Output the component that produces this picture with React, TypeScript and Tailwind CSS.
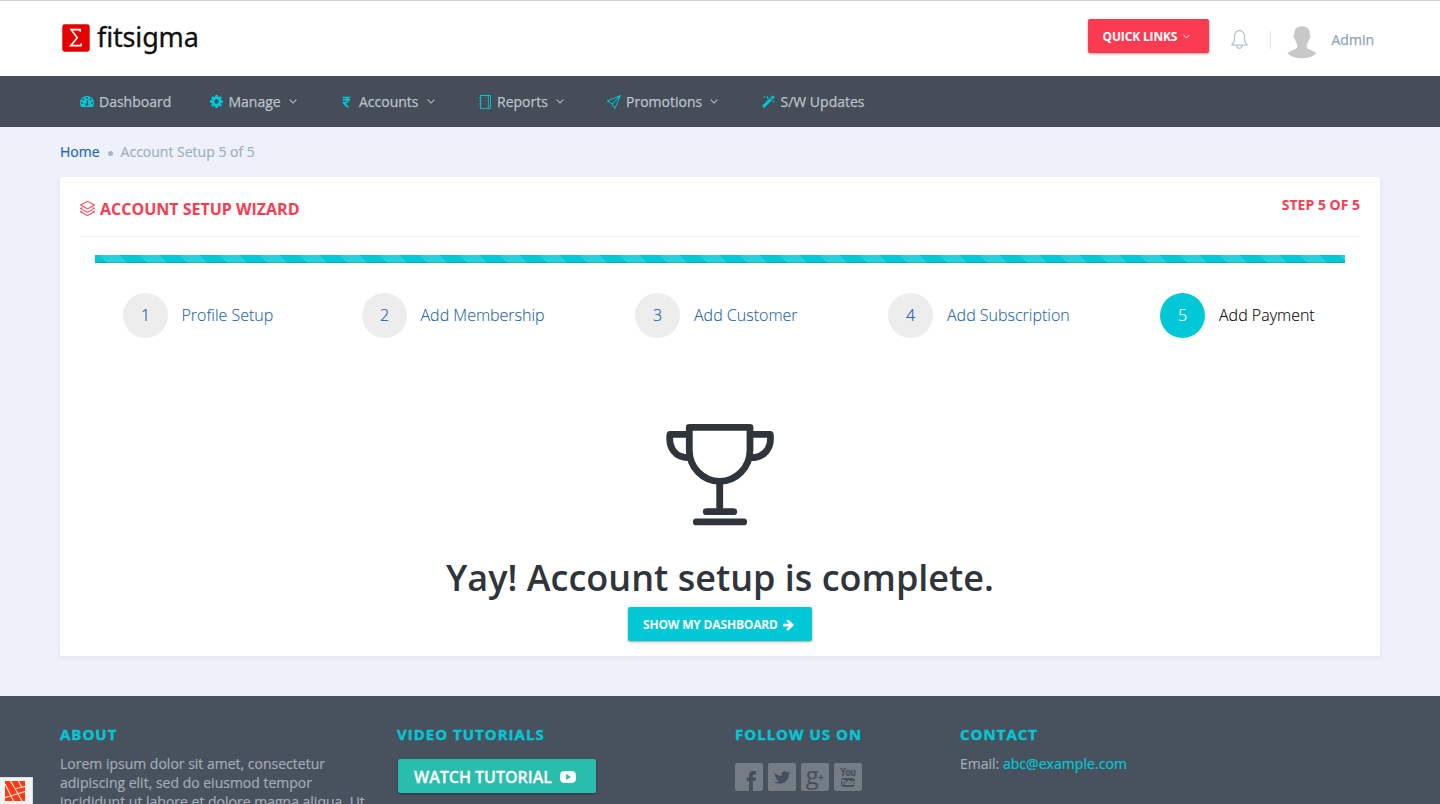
import type { ReactNode } from "react";
import { FaRupeeSign } from "react-icons/fa";
import { SlLayers, SlNotebook, SlPaperPlane, SlBell } from "react-icons/sl";

function Angle({ className }: { className: string }) {
  return (
    <svg viewBox="0 0 10 6" className={className} fill="none" stroke="currentColor" strokeWidth="1.3">
      <path d="M0.8 0.8 5 5 9.2 0.8" />
    </svg>
  );
}

function Gauge() {
  return (
    <svg viewBox="0 128 1792 1408" className="h-[11px] w-[14px]" fill="currentColor">
      <path d="M1792 1024q0 261-141 483-19 29-54 29h-1402q-35 0-54-29-141-221-141-483 0-182 71-348t191-286 286-191 348-71 348 71 286 191 191 286 71 348z" />
      <g fill="#444d58">
        <circle cx="256" cy="1024" r="128" />
        <circle cx="448" cy="576" r="128" />
        <circle cx="896" cy="384" r="128" />
        <circle cx="1344" cy="576" r="128" />
        <circle cx="1536" cy="1024" r="128" />
        <circle cx="880" cy="1220" r="190" />
        <path d="M820 1100 930 640 1060 670 960 1110Z" />
      </g>
    </svg>
  );
}

function Cog() {
  return (
    <svg viewBox="0 128 1536 1536" className="h-[13px] w-[13px]" fill="currentColor">
      <path d="M1024 896q0-106-75-181t-181-75-181 75-75 181 75 181 181 75 181-75 75-181zm512-109v222q0 12-8 23t-20 13l-185 28q-19 54-39 91 35 50 107 138 10 12 10 25t-9 23q-27 37-99 108t-94 71q-12 0-26-9l-138-108q-44 23-91 38-16 136-29 186-7 28-36 28h-222q-14 0-24.5-8.5t-11.5-21.5l-28-184q-49-16-90-37l-141 107q-10 9-25 9-14 0-25-11-126-114-165-168-7-10-7-23 0-12 8-23 15-21 51-66.5t54-70.5q-27-50-41-99l-183-27q-13-2-21-12.5t-8-23.5v-222q0-12 8-23t19-13l186-28q14-46 39-92-40-57-107-138-10-12-10-24 0-10 9-23 26-36 98.5-107.5t94.5-71.5q13 0 26 10l138 107q44-23 91-38 16-136 29-186 7-28 36-28h222q14 0 24.500 8.500t11.500 21.500l28 184q49 16 90 37l142-107q9-9 24-9 13 0 25 10 129 119 165 170 7 8 7 22 0 12-8 23-15 21-51 66.500t-54 70.500q26 50 41 98l183 28q13 2 21 12.500t8 23.500z" />
    </svg>
  );
}

function Wand() {
  return (
    <svg viewBox="0 0 13 13" className="h-[13px] w-[13px]" fill="currentColor">
      <path d="M0 11 8 3 10.100 5.100 2.100 13.100Z M8.500 2.500 10.300.8Q10.800.4 11.300.8L12.300 1.800Q12.800 2.300 12.300 2.800L10.600 4.600Z" />
      <path d="M2.500 0.500 2.900 1.400 3.800 1.800 2.900 2.200 2.500 3.100 2.100 2.200 1.200 1.800 2.100 1.400ZM5.500.8 6 2.100 7.300 2.600 6 3.100 5.500 4.400 5 3.100 3.700 2.600 5 2.100ZM11.700 5.300 12.100 6.200 13 6.600 12.100 7 11.700 7.900 11.300 7 10.400 6.600 11.300 6.200Z" />
    </svg>
  );
}

function ArrowRight({ className }: { className: string }) {
  return (
    <svg viewBox="0 100 1536 1536" className={className} fill="currentColor">
      <path d="M1472 800q0 54-37 91l-651 651q-39 37-91 37-51 0-90-37l-75-75q-38-38-38-91t38-91l293-293h-704q-52 0-84.5-37.5t-32.5-90.5v-128q0-53 32.5-90.5t84.5-37.5h704l-293-294q-38-36-38-90t38-90l75-75q38-38 90-38 53 0 91 38l651 651q37 35 37 90z" />
    </svg>
  );
}

function Logo() {
  return (
    <div className="flex items-start pt-[22px] pl-[2px]">
      <svg viewBox="0 0 28 28" className="mt-px h-7 w-7">
        <rect x="0.3" y="0.3" width="27.4" height="27.4" rx="2.400" fill="#e60000" />
        <path d="M18.200 7.800V5.700H9.200L15.200 13.700 8.800 21.700H19V19.500" fill="none" stroke="#fff" strokeWidth="1.700" />
      </svg>
      <span className="ml-[7px] -mt-[3px] font-['Noto_Sans',sans-serif] text-[27px] leading-[34px] tracking-[-0.150px] text-[#111] [-webkit-text-stroke:0.3px_#111]">
        fitsigma
      </span>
    </div>
  );
}

type NavEntry = { label: string; width: string; iconWidth: string; icon: ReactNode; menu: boolean };

const nav: NavEntry[] = [
  { label: "Dashboard", width: "w-[130px]", iconWidth: "w-[19px]", icon: <Gauge />, menu: false },
  { label: "Manage", width: "w-[132px]", iconWidth: "w-[18.5px]", icon: <Cog />, menu: true },
  { label: "Accounts", width: "w-[136px]", iconWidth: "w-[17px]", icon: <FaRupeeSign className="h-[12px] w-[9px]" />, menu: true },
  { label: "Reports", width: "w-[128px]", iconWidth: "w-[19px]", icon: <SlNotebook className="h-[14px] w-[14px]" />, menu: true },
  { label: "Promotions", width: "w-[156px]", iconWidth: "w-[20px]", icon: <SlPaperPlane className="ml-px h-[14px] w-[14px]" />, menu: true },
  { label: "S/W Updates", width: "w-[130px]", iconWidth: "w-[18.5px]", icon: <Wand />, menu: false },
];

const steps = [
  { label: "Profile Setup", width: "w-[239px]", gap: "mr-[13.5px]" },
  { label: "Add Membership", width: "w-[273px]", gap: "mr-[13.5px]" },
  { label: "Add Customer", width: "w-[253px]", gap: "mr-[14px]" },
  { label: "Add Subscription", width: "w-[272px]", gap: "mr-[14px]" },
  { label: "Add Payment", width: "w-[170px]", gap: "mr-[14px]" },
];

function Trophy() {
  return (
    <svg viewBox="0 0 110 104" className="h-[104px] w-[110px]" fill="none" stroke="#2f353b" strokeWidth="6.8" strokeLinecap="round" strokeLinejoin="round">
      <path d="M24.300 5.300H85V28A30.350 31.400 0 0 1 24.300 28Z" />
      <path d="M22 12.300H5C3.200 26 10.500 36 24 35.700M87.300 12.300H105.200C107 26 99.500 36 85.300 35.700" />
      <path d="M54.700 61V89M41.300 89.700H68.700M31.300 99.900H78.700" />
    </svg>
  );
}

function Header() {
  return (
    <header className="flex h-[76px] justify-between border-t border-[#cfcfcf] bg-white px-[60px]">
      <Logo />
      <div className="flex pr-[6px]">
        <button className="mt-[18px] flex h-[34px] w-[121px] items-center rounded-[2px] bg-[#fb3b51] pl-[15px] text-[12px] text-white shadow-[0_1px_3px_rgba(0,0,0,0.2),0_1px_2px_rgba(0,0,0,0.2)]">
          <span className="pt-px font-bold tracking-[-0.150px] whitespace-nowrap">QUICK LINKS</span>
          <Angle className="mt-px ml-[6px] h-[5px] w-[7px]" />
        </button>
        <SlBell className="mt-[29px] ml-[21px] h-[19px] w-[19px] text-[#b4c3cd]" />
        <span className="mt-[30px] ml-[21px] h-[18px] w-px bg-[#e0e6ec]" />
        <svg viewBox="0 0 30 33" className="mt-[25px] ml-[16px] h-[33px] w-[30px]" fill="#c8c8c8">
          <path d="M15 .3c5 0 8 2.700 7.700 8.200 1.300.3.900 3.900-.7 4.600-.4 2.600-1.300 4-2.200 5v3.300c1.200 2.400 6.600 2.600 9.700 5.900C26 30.700 21 32.300 15 32.300S4 30.700.5 27.300c3.100-3.300 8.500-3.500 9.700-5.900v-3.300c-.9-1-1.800-2.400-2.200-5-1.600-.7-2-4.300-.7-4.600C7 3 10 .3 15 .3Z" />
        </svg>
        <span className="mt-[29px] ml-[15px] text-[14px] leading-5 text-[#8ea3b6] [-webkit-text-stroke:0.25px]">Admin</span>
      </div>
    </header>
  );
}

function NavBar() {
  return (
    <nav className="flex h-[51px] items-center bg-[#444d58] pl-[80px]">
      {nav.map((n) => (
        <a key={n.label} className={`flex items-center text-[14px] text-[#bcc2cb] ${n.width}`}>
          <span className={`shrink-0 text-[#00c8d7] ${n.iconWidth}`}>{n.icon}</span>
          <span className="whitespace-nowrap [-webkit-text-stroke:0.25px]">{n.label}</span>
          {n.menu && <Angle className="ml-[8px] h-[5px] w-[8px]" />}
        </a>
      ))}
    </nav>
  );
}

function Wizard() {
  return (
    <main className="mx-[60px] h-[479px] rounded-[2px] bg-white px-5 shadow-[0_2px_3px_2px_rgba(0,0,0,0.03)]">
      <div className="flex h-[60px] justify-between border-b border-[#eee] text-[#fb3b51]">
        <h1 className="flex items-center pt-[5px] text-[16px] font-bold">
          <SlLayers className="mr-[5px] mb-[2px] h-[15px] w-[15px]" />
          <span>ACCOUNT SETUP WIZARD</span>
        </h1>
        <span className="pt-[18px] text-[14px] leading-5 font-bold">STEP 5 OF 5</span>
      </div>
      <div className="mx-[15px] mt-[18px] h-2 bg-[#00c8d7] bg-[linear-gradient(45deg,rgba(255,255,255,.15)_25%,transparent_25%,transparent_50%,rgba(255,255,255,.15)_50%,rgba(255,255,255,.15)_75%,transparent_75%,transparent)] bg-[length:40px_40px] bg-[position:5px_0] shadow-[inset_0_-1px_0_rgba(0,0,0,0.15)]" />
      <ol className="mt-[30px] flex pl-[43px]">
        {steps.map((s, i) => (
          <li key={s.label} className={`flex shrink-0 items-center text-[16px] font-light ${s.width} ${i === 4 ? "text-black" : "text-[#1a5fae]"}`}>
            <span className={`flex h-[45px] w-[45px] items-center justify-center rounded-full pb-[2px] [-webkit-text-stroke:0.2px] ${s.gap} ${i === 4 ? "bg-[#00c8d7] text-white" : "bg-[#ededed]"}`}>
              {i + 1}
            </span>
            <span className="pb-[2px] [-webkit-text-stroke:0.1px]">{s.label}</span>
          </li>
        ))}
      </ol>
      <div className="flex flex-col items-center pt-[84px]">
        <Trophy />
        <h2 className="mt-[29px] text-[36px] leading-[46px] font-semibold whitespace-nowrap text-[#2f353b]">
          Yay! Account setup is complete.
        </h2>
        <button className="mt-[6px] flex h-[34px] w-[184px] items-center rounded-[2px] bg-[#00c8d7] pl-[15px] text-[12px] font-bold text-white shadow-[0_1px_3px_rgba(0,0,0,0.2),0_1px_2px_rgba(0,0,0,0.2)]">
          <span className="pt-px tracking-[-0.170px] whitespace-nowrap">SHOW MY DASHBOARD</span>
          <ArrowRight className="mt-[2px] ml-[5px] h-[11px] w-[11px]" />
        </button>
      </div>
    </main>
  );
}

function Tile({ children }: { children: ReactNode }) {
  return <span className="flex h-7 w-7 items-center justify-center rounded-[2px] bg-[#747c86] text-[#46505d]">{children}</span>;
}

function FooterTitle({ children }: { children: ReactNode }) {
  return (
    <h3 className="text-[15px] leading-5 font-bold tracking-[1px] whitespace-nowrap text-[#00c8d7] [-webkit-text-stroke:0.4px]">
      {children}
    </h3>
  );
}

function Footer() {
  return (
    <footer className="mt-[40px] flex h-[108px] overflow-hidden bg-[#48525e] pt-[28px] pl-[60px] text-[14px] text-[#a2abb7]">
      <section className="w-[337px]">
        <FooterTitle>ABOUT</FooterTitle>
        <p className="mt-[10px] w-[320px] leading-[19px] whitespace-nowrap [-webkit-text-stroke:0.2px]">
          Lorem ipsum dolor sit amet, consectetur
          <br />
          adipiscing elit, sed do eiusmod tempor
          <br />
          incididunt ut labore et dolore magna aliqua. Ut
        </p>
      </section>
      <section className="w-[338px]">
        <FooterTitle>VIDEO TUTORIALS</FooterTitle>
        <button className="mt-[15px] ml-px flex h-[34px] w-[198px] items-center rounded-[2px] bg-[#29bdac] pl-[16px] text-[16px] font-semibold text-white shadow-[0_1px_3px_rgba(0,0,0,0.2),0_1px_2px_rgba(0,0,0,0.2)]">
          <span className="pt-[2px] whitespace-nowrap [-webkit-text-stroke:0.3px]">WATCH TUTORIAL</span>
          <svg viewBox="0 0 16 12" className="mt-[2px] ml-[8px] h-3 w-4">
            <path fillRule="evenodd" d="M3 .3Q8-.2 13 .3 15.500.600 15.800 3 16.100 6 15.800 9 15.500 11.400 13 11.700 8 12.200 3 11.700.5 11.400.2 9-.1 6 .2 3 .5.6 3 .3ZM6.200 3V9L11 6Z" fill="#fff" />
          </svg>
        </button>
      </section>
      <section className="w-[225px]">
        <FooterTitle>FOLLOW US ON</FooterTitle>
        <div className="mt-[19px] flex gap-[5px]">
          <Tile>
            <svg viewBox="0 0 28 28" className="h-7 w-7" fill="currentColor">
              <path d="M14 28V18H11.800V14.500H14V12.500C14 9.500 15.500 8 18 8H21V11.500H19.200C18.200 11.500 17.900 12 17.900 12.900V14.500H21L20.600 18H17.900V28Z" />
            </svg>
          </Tile>
          <Tile>
            <svg viewBox="0 0 28 28" className="h-7 w-7" fill="currentColor">
              <path d="M6.500 9.400C8.500 11.600 11 12.800 13.600 12.900 13 10.200 14.800 8.300 17 8.300 18 8.300 18.900 8.700 19.500 9.400L21.700 8.600 20.600 10.400 22.300 10C22 10.600 21.400 11.200 20.800 11.600 20.900 16.900 17 20.700 12 20.700 9.900 20.700 8 20.100 6.300 19.100 8.200 19.200 9.900 18.700 11.200 17.700 9.600 17.600 8.500 16.700 8 15.400H9.400C7.700 14.900 6.800 13.700 6.700 12.100L8 12.400C6.500 11.500 6 10.400 6.500 9.400Z" />
            </svg>
          </Tile>
          <Tile>
            <span className="-mt-[5px] text-[24px] leading-7">g</span>
            <span className="-ml-px text-[11px] leading-7 font-semibold">+</span>
          </Tile>
          <Tile>
            <span className="flex flex-col items-center font-['Liberation_Sans_Narrow','Liberation_Sans',sans-serif] font-bold">
              <span className="scale-x-[0.85] text-[10px] leading-[9px] [-webkit-text-stroke:0.3px]">You</span>
              <span className="mt-px flex h-[9px] w-[14px] items-center justify-center rounded-[3px] bg-[#46505d] text-[#8d949d]">
                <span className="scale-x-[0.85] text-[7px] leading-[9px]">Tube</span>
              </span>
            </span>
          </Tile>
        </div>
      </section>
      <section>
        <FooterTitle>CONTACT</FooterTitle>
        <p className="mt-[10px] leading-[19px] [-webkit-text-stroke:0.2px]">
          Email: <a className="tracking-[0.050px] text-[#00c8d7]">abc@example.com</a>
        </p>
      </section>
    </footer>
  );
}

export default function App() {
  return (
    <div className="relative h-[804px] overflow-hidden bg-[#eef1fa] font-['Open_Sans',sans-serif]">
      <Header />
      <NavBar />
      <div className="flex h-[50px] items-center pb-px text-[14px] text-[#a0aebf] [-webkit-text-stroke:0.2px]">
        <a className="pl-[60px] text-[#1d66b4]">Home</a>
        <span className="mx-[8px] mt-[4px] h-[5px] w-[5px] rounded-full bg-[#a7b4c6]" />
        <span>Account Setup 5 of 5</span>
      </div>
      <Wizard />
      <Footer />
      <div className="absolute bottom-0 left-0 h-[27px] w-[33px] border-t border-r border-[#ddd] bg-[#f5f5f5] pt-[3px] pl-[5px]">
        <svg viewBox="0 0 20 20" className="h-5 w-5">
          <rect width="20" height="20" fill="#ff3a12" />
          <path d="M0 3 8.500 20M0 16.500 7 14.500 20 10.500M5.500 0 12 11 17 20M11 7.500 20 5.500M13.500 0 16.500 6" stroke="#fde3dc" strokeWidth="1.200" fill="none" />
        </svg>
      </div>
    </div>
  );
}
